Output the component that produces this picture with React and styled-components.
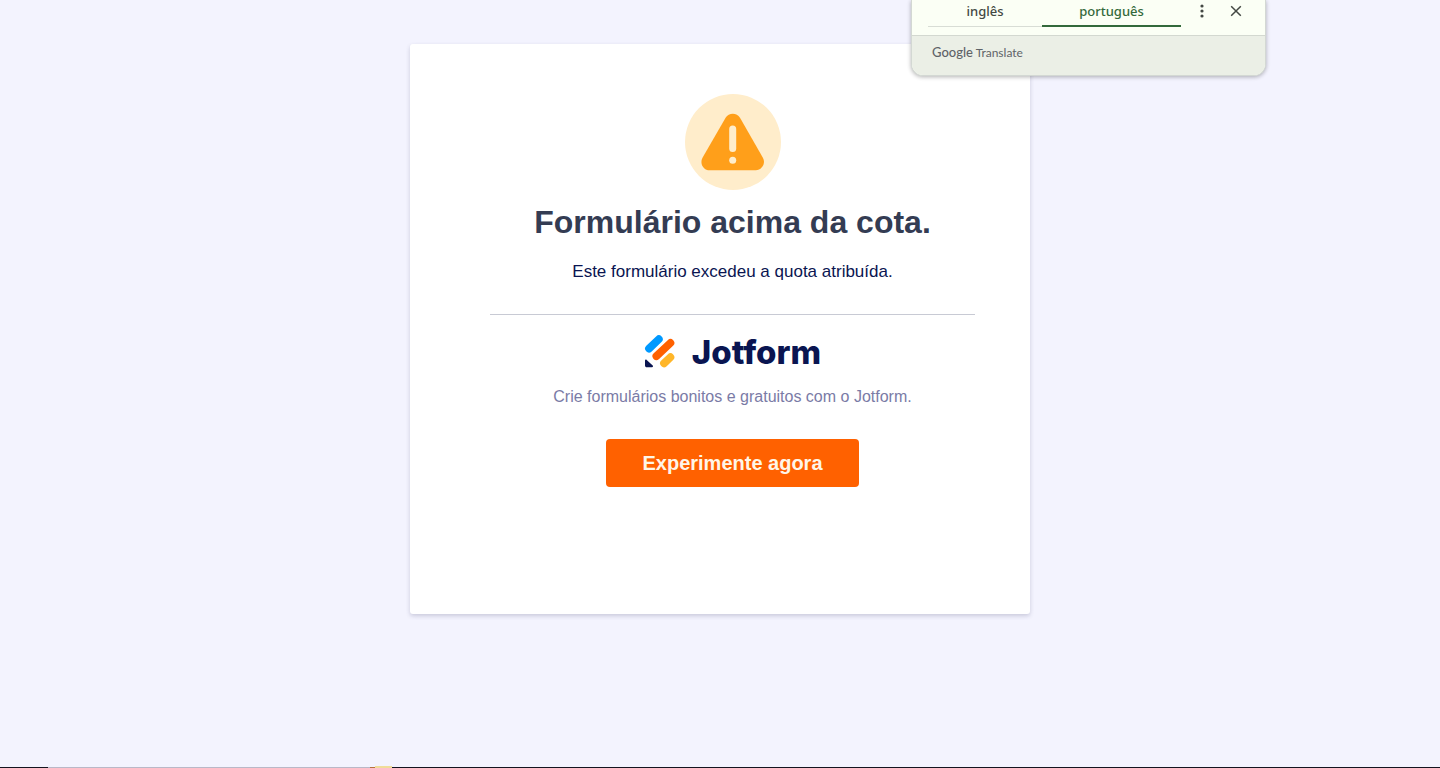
import styled, { createGlobalStyle } from 'styled-components';

function WarningIcon() {
  return (
    <svg width="96" height="96" viewBox="0 0 96 96" aria-hidden="true">
      <circle cx="48" cy="48" r="48" fill="#ffedcb" />
      <path
        d="M40.6 23.8C43.8 18.3 51.8 18.3 55 23.8L77.9 63.8C81 69.3 77 76.3 70.7 76.3H24.7C18.3 76.3 14.4 69.3 17.5 63.8Z"
        fill="#ff9f1a"
      />
      <path d="M47.7 35V54.5" stroke="#ffedcb" strokeWidth="7" strokeLinecap="round" />
      <circle cx="47.7" cy="66.3" r="3.5" fill="#ffedcb" />
    </svg>
  );
}

function JotformMark() {
  return (
    <svg width="32" height="34" viewBox="0 0 32 34" aria-hidden="true">
      <g fill="none" strokeWidth="7.8" strokeLinecap="round">
        <path d="M5 13.6L14.8 4.2" stroke="#0099ff" />
        <path d="M12.4 21.2L26.4 8" stroke="#ff6100" />
        <path d="M20 28.4L26.4 22.2" stroke="#ffb629" />
      </g>
      <path d="M1 25.6C1 24.6 2 24.3 2.7 25L8.7 30.6C9.4 31.3 9 32.2 8 32.2H2.8C1.8 32.2 1 31.4 1 30.4Z" fill="#0a1551" />
    </svg>
  );
}

function TranslatePopup() {
  return (
    <Popup>
      <TabBar>
        <Tab $width={114}>inglês</Tab>
        <Tab $width={139} $active>português</Tab>
        <IconButton aria-label="Opções">
          <svg width="16" height="16" viewBox="0 0 16 16" fill="#434843">
            <circle cx="8" cy="3" r="1.6" />
            <circle cx="8" cy="8" r="1.6" />
            <circle cx="8" cy="13" r="1.6" />
          </svg>
        </IconButton>
        <IconButton aria-label="Fechar">
          <svg width="16" height="16" viewBox="0 0 16 16" stroke="#434843" strokeWidth="1.5">
            <path d="M3.2 3.2L12.8 12.8M12.8 3.2L3.2 12.8" />
          </svg>
        </IconButton>
      </TabBar>
      <PopupFooter>
        <Google>Google</Google> Translate
      </PopupFooter>
    </Popup>
  );
}

function App() {
  return (
    <Page>
      <GlobalStyle />
      <Main>
        <Card>
          <WarningIcon />
          <Title>Formulário acima da cota.</Title>
          <Message>Este formulário excedeu a quota atribuída.</Message>
          <Divider />
          <Logo>
            <JotformMark />
            <LogoText>Jotform</LogoText>
          </Logo>
          <Tagline>Crie formulários bonitos e gratuitos com o Jotform.</Tagline>
          <TryButton>Experimente agora</TryButton>
        </Card>
      </Main>
      <TaskbarEdge>
        <Segment $width="48px" $color="#14131f" />
        <Segment $width="322px" $color="#b9b8c8" />
        <Segment $width="5px" $color="#b5703f" />
        <Segment $width="17px" $color="#f0dc9a" $tall />
        <Segment $color="#14131f" />
      </TaskbarEdge>
      <TranslatePopup />
    </Page>
  );
}

export default App;

const GlobalStyle = createGlobalStyle`
  * {
    box-sizing: border-box;
  }

  body {
    margin: 0;
    background: #f3f3fe;
    font-family: "Liberation Sans", Arial, sans-serif;
  }
`;

const Page = styled.div`
  min-height: 100vh;
  display: flex;
  flex-direction: column;
`;

const Main = styled.main`
  flex: 1;
  display: flex;
  justify-content: center;
  align-items: flex-start;
  padding: 44px 16px;
`;

const Card = styled.section`
  width: 100%;
  max-width: 620px;
  padding: 50px 55px 127px 80px;
  display: flex;
  flex-direction: column;
  align-items: center;
  text-align: center;
  background: #fff;
  border-radius: 3px;
  box-shadow: 0 2px 4px rgba(60, 60, 100, 0.22);
`;

const Title = styled.h1`
  margin: 12px 0 0;
  font-size: 32px;
  line-height: 40px;
  color: #343c53;
`;

const Message = styled.p`
  margin: 20px 0 0;
  font-size: 17px;
  line-height: 20px;
  color: #0a1551;
`;

const Divider = styled.hr`
  width: 100%;
  margin: 32px 0 20px;
  border: 0;
  border-top: 1px solid #c8cad4;
`;

const Logo = styled.div`
  display: flex;
  align-items: center;
  gap: 16px;
  height: 34px;
`;

const LogoText = styled.span`
  font-family: Inter, sans-serif;
  font-size: 33px;
  font-weight: 800;
  line-height: 34px;
  color: #0a1551;
`;

const Tagline = styled.p`
  margin: 18px 0 0;
  font-size: 16px;
  line-height: 20px;
  color: #7a7ba6;
`;

const TryButton = styled.button`
  height: 48px;
  margin-top: 32px;
  padding: 0 36px;
  border: 0;
  border-radius: 4px;
  background: #ff6100;
  color: #fff6e8;
  font-family: inherit;
  font-size: 20px;
  font-weight: 700;
  cursor: pointer;
`;

const TaskbarEdge = styled.div`
  display: flex;
  align-items: flex-end;
  height: 2px;
`;

const Segment = styled.div`
  flex: ${({ $width }) => ($width ? `0 0 ${$width}` : '1')};
  height: ${({ $tall }) => ($tall ? '2px' : '1px')};
  background: ${({ $color }) => $color};
`;

const Popup = styled.aside`
  position: absolute;
  top: 0;
  right: 174px;
  width: 355px;
  border: 1px solid #d3d8d3;
  border-top: 0;
  border-radius: 0 0 12px 12px;
  overflow: hidden;
  background: #fbfff5;
  box-shadow: 0 1px 4px rgba(0, 0, 0, 0.3);
  font-family: "Noto Sans", "Open Sans", sans-serif;
`;

const TabBar = styled.div`
  display: flex;
  height: 35px;
  padding: 0 12px 8px 16px;
`;

const Tab = styled.button`
  flex: none;
  width: ${({ $width }) => $width}px;
  padding: 0 0 4px;
  border: 0;
  border-bottom: ${({ $active }) => ($active ? '2px solid #33693b' : '1px solid #d8ddd5')};
  background: none;
  color: ${({ $active }) => ($active ? '#33693b' : '#434843')};
  font-family: inherit;
  font-size: 13px;
  font-weight: 500;
  line-height: 20px;
`;

const IconButton = styled.button`
  flex: none;
  width: 34px;
  height: 22px;
  padding: 0;
  border: 0;
  background: none;
  display: flex;
  align-items: center;
  justify-content: center;

  &:nth-of-type(3) {
    margin-left: 4px;
  }
`;

const PopupFooter = styled.div`
  height: 40px;
  padding: 7px 20px;
  border-top: 1px solid #d3d8d0;
  background: #ebefe6;
  color: #5f6368;
  font-family: Lato, sans-serif;
  font-size: 12px;
  line-height: 18px;
`;

const Google = styled.span`
  font-size: 13px;
  font-weight: 500;
`;
